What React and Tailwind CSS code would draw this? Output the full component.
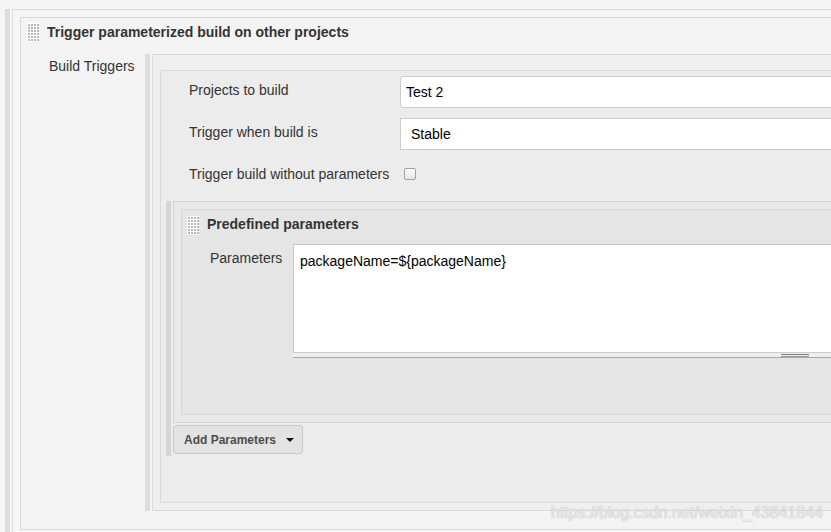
const Grip = () => (
  <svg width="12" height="19" viewBox="0 0 12 19" className="shrink-0">
    <rect width="12" height="19" fill="#ffffff" />
    {[0, 1, 2, 3].map((c) =>
      [0, 1, 2, 3, 4, 5].map((r) => (
        <rect key={`${c}-${r}`} x={1 + c * 3} y={1 + r * 3} width="2" height="2" fill="#b9b9b9" />
      ))
    )}
  </svg>
)

const Caret = () => (
  <svg width="8" height="4" viewBox="0 0 8 4" className="ml-[10px]">
    <path d="M0 0h8L4 4z" fill="#111" />
  </svg>
)

export default function App() {
  return (
    <div className="relative w-[831px] h-[532px] overflow-hidden bg-[#f5f5f5] font-['Liberation_Sans',Arial,sans-serif] text-[14px] leading-[18px] text-[#333]">
      <div className="flex w-[900px] h-full pt-[9px] pl-[5px]">
        {/* outer drag bar */}
        <div className="w-[5px] shrink-0 bg-[#dcdcdc]" />
        <div className="ml-[2px] flex-1 border-l border-t border-[#dadada] pl-[7px] pt-[7px]">
          <div className="h-[513px] border-l border-t border-b border-[#dadada] bg-[#f3f3f3]">
            {/* section header */}
            <div className="flex h-[36px] pl-[6px] pt-[5px]">
              <Grip />
              <div className="ml-[8px] font-bold">Trigger parameterized build on other projects</div>
            </div>

            <div className="flex">
              <div className="w-[124px] shrink-0 pl-[28px] pt-[3px]">Build Triggers</div>
              <div className="w-[5px] shrink-0 bg-[#dcdcdc]" />
              <div className="ml-[2px] flex-1 h-[457px] border-l border-t border-b border-[#dadada] bg-[#efefef] pl-[7px] pt-[15px]">
                <div className="h-[433px] border-l border-t border-b border-[#dadada] bg-[#ececec]">
                  {/* projects */}
                  <div className="flex pt-[5px]">
                    <div className="w-[239px] shrink-0 pl-[28px] pt-[5px]">Projects to build</div>
                    <div className="flex-1 h-[32px] rounded-[3px] border border-[#cccccc] bg-white pl-[5px] pt-[6px] text-black">Test 2</div>
                  </div>
                  {/* trigger condition */}
                  <div className="flex mt-[10px]">
                    <div className="w-[239px] shrink-0 pl-[28px] pt-[5px]">Trigger when build is</div>
                    <div className="flex-1 h-[32px] border border-[#cccccc] bg-white pl-[10px] pt-[6px] text-black">Stable</div>
                  </div>
                  {/* no-params checkbox */}
                  <div className="flex items-center h-[18px] mt-[15px]">
                    <div className="w-[239px] shrink-0 pl-[28px]">Trigger build without parameters</div>
                    <span className="ml-[4px] w-[12px] h-[12px] rounded-[2px] border border-[#a0a0a0] bg-gradient-to-b from-[#fcfcfc] to-[#e6e6e6]" />
                  </div>

                  {/* predefined parameters block */}
                  <div className="flex mt-[18px] pl-[5px]">
                    <div className="w-[5px] shrink-0 bg-[#d6d6d6]" />
                    <div className="ml-[2px] flex-1 pb-[2px]">
                      <div className="h-[222px] border-l border-t border-b border-[#d6d6d6] bg-[#e9e9e9] pl-[7px] pt-[7px]">
                        <div className="h-[206px] border-l border-t border-b border-[#d6d6d6] bg-[#e5e5e5]">
                          <div className="flex h-[34px] pl-[5px] pt-[6px]">
                            <Grip />
                            <div className="ml-[8px] -mt-[1px] font-bold">Predefined parameters</div>
                          </div>
                          <div className="flex">
                            <div className="w-[111px] shrink-0 pl-[28px] pt-[5px]">Parameters</div>
                            <div className="flex-1">
                              <div className="h-[108px] border-l border-t border-[#c8c8c8] bg-white pl-[6px] pt-[7px] text-black">
                                packageName=${'{'}packageName{'}'}
                              </div>
                              <div className="relative h-[6px] border-t border-b border-t-[#cccccc] border-b-[#a8a8a8] bg-[#eeeeee]">
                                <div className="absolute left-[488px] top-[1px] w-[28px] h-[3px] border-t border-b border-t-[#808080] border-b-[#9a9a9a]" />
                              </div>
                            </div>
                          </div>
                        </div>
                      </div>
                      <button className="mt-[2px] flex items-center h-[29px] w-[130px] rounded-[3px] border border-[#c9c9c9] bg-[#e3e3e3] pl-[10px] text-[12px] font-bold text-[#4d4d4d]">
                        Add Parameters
                        <Caret />
                      </button>
                    </div>
                  </div>
                </div>
              </div>
            </div>
          </div>
        </div>
      </div>

      <div className="absolute left-[551px] top-[504px] text-[16px] leading-[18px] text-white/80 [text-shadow:0_0_1px_#8a8a8a]">
        https://blog.csdn.net/weixin_43841844
      </div>
    </div>
  )
}
